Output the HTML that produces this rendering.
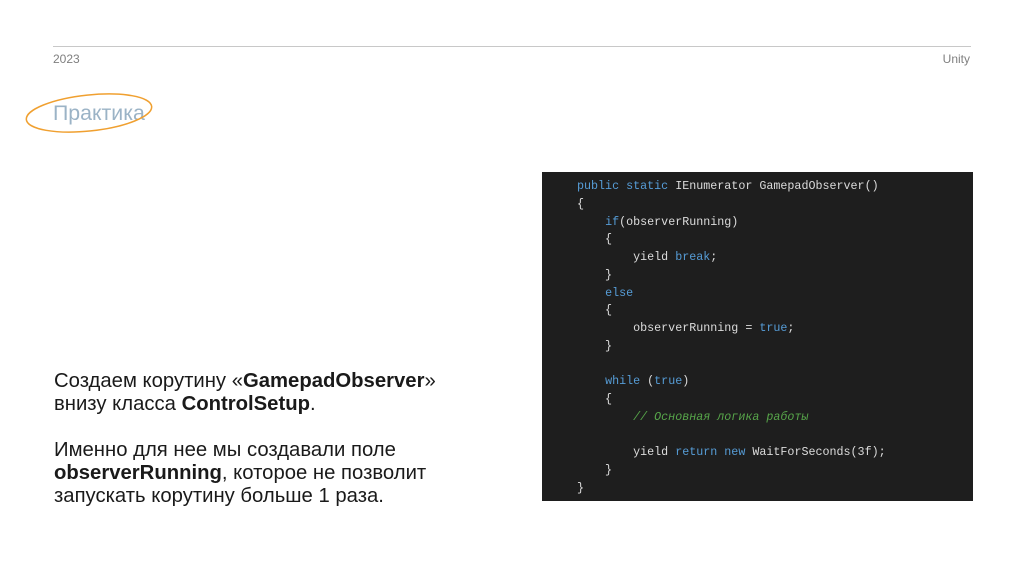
<!DOCTYPE html><html><head><meta charset="utf-8"><style>
body{margin:0;width:1024px;height:574px;background:#fff;position:relative;overflow:hidden;font-family:"Liberation Sans",sans-serif}
.hr{position:absolute;left:53px;top:46px;width:918px;height:1px;background:#c8c8c8}
.sm{position:absolute;top:52px;font-size:12px;color:#7f7f7f}
.title{position:absolute;left:53px;top:101px;font-size:21.3px;color:#9bb3c6}
.code{position:absolute;left:542px;top:172px;width:431px;height:329px;background:#1e1e1e}
pre{margin:0;position:absolute;left:577px;top:178px;font-family:"Liberation Mono",monospace;font-size:11.7px;line-height:17.76px;color:#dcdcdc}
.k{color:#569cd6}.c{color:#57a64a;font-style:italic}
.txt{position:absolute;left:54px;top:370px;font-size:20.3px;line-height:23px;color:#1a1a1a}
</style></head><body>
<div class="hr"></div>
<div class="sm" style="left:53px">2023</div>
<div class="sm" style="right:54px">Unity</div>
<div class="title">Практика</div>
<svg style="position:absolute;left:22px;top:88px" width="136" height="50"><ellipse cx="67" cy="25" rx="63" ry="18" transform="rotate(-6 67 25)" fill="none" stroke="#f0a030" stroke-width="1.5"/></svg>
<div class="code"></div>
<pre><span class="k">public static</span> IEnumerator GamepadObserver()
{
    <span class="k">if</span>(observerRunning)
    {
        yield <span class="k">break</span>;
    }
    <span class="k">else</span>
    {
        observerRunning = <span class="k">true</span>;
    }

    <span class="k">while</span> (<span class="k">true</span>)
    {
        <span class="c">// Основная логика работы</span>

        yield <span class="k">return new</span> WaitForSeconds(3f);
    }
}</pre>
<div class="txt">Создаем корутину «<b>GamepadObserver</b>»<br>внизу класса <b>ControlSetup</b>.<br><br>Именно для нее мы создавали поле<br><b>observerRunning</b>, которое не позволит<br>запускать корутину больше 1 раза.</div>
</body></html>
